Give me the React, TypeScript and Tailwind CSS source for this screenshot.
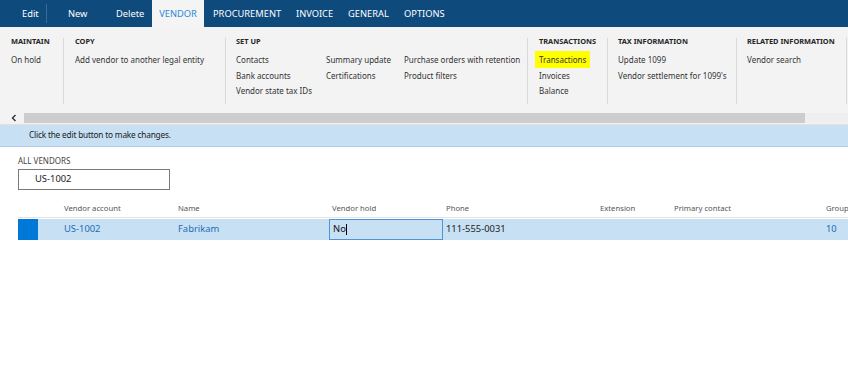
import React from "react";

const font = { fontFamily: "'Noto Sans', 'Open Sans', sans-serif" };

const Sep = () => <div className="w-px shrink-0 self-stretch bg-[#d9d9d9] mt-[11px] mb-[8px]" />;

const Group = ({ title, children, className }: { title: string; children: React.ReactNode; className?: string }) => (
  <div className={"flex flex-col shrink-0 pt-[8px] whitespace-nowrap " + (className ?? "")}>
    <div className="text-[7.4px] font-bold text-[#262626] leading-[12px]">{title}</div>
    <div className="mt-[5px]">{children}</div>
  </div>
);

const Item = ({ children, hl }: { children: React.ReactNode; hl?: boolean }) => (
  <div className="h-[15.5px] leading-[15px] text-[8px] text-[#333]">
    <span className={hl ? "bg-[#ffff00] px-[4px] -mx-[4px] py-[3px]" : ""}>{children}</span>
  </div>
);

export default function App() {
  const cols = [
    { label: "Vendor account", w: "w-[114px]" },
    { label: "Name", w: "w-[154px]" },
    { label: "Vendor hold", w: "w-[114px]" },
    { label: "Phone", w: "w-[154px]" },
    { label: "Extension", w: "w-[74px]" },
    { label: "Primary contact", w: "w-[152px]" },
    { label: "Group", w: "w-[40px]" },
  ];
  return (
    <div className="w-[848px] h-[384px] bg-white overflow-hidden" style={font}>
      {/* top command bar */}
      <div className="h-[27px] bg-[#0f4a7d] flex items-stretch text-[9.3px] text-white whitespace-nowrap">
        <div className="w-[46px] shrink-0 flex items-center pl-[22px]">Edit</div>
        <div className="w-px shrink-0 bg-[#3a6a95] my-[4px]" />
        <div className="w-[69px] shrink-0 flex items-center pl-[21px]">New</div>
        <div className="w-[36px] shrink-0 flex items-center">Delete</div>
        <div className="w-[52px] shrink-0 flex items-center justify-center bg-[#f4f4f4] text-[#2b88d8]">VENDOR</div>
        <div className="w-[9px] shrink-0" />
        <div className="w-[83px] shrink-0 flex items-center">PROCUREMENT</div>
        <div className="w-[52px] shrink-0 flex items-center">INVOICE</div>
        <div className="w-[56px] shrink-0 flex items-center">GENERAL</div>
        <div className="shrink-0 flex items-center">OPTIONS</div>
      </div>

      {/* ribbon */}
      <div className="h-[85px] bg-[#f3f3f3] flex overflow-hidden">
        <Group title="MAINTAIN" className="pl-[11px] w-[63px]">
          <Item>On hold</Item>
        </Group>
        <Sep />
        <Group title="COPY" className="pl-[11px] w-[161px]">
          <Item>Add vendor to another legal entity</Item>
        </Group>
        <Sep />
        <Group title="SET UP" className="pl-[10px] w-[301px]">
          <div className="flex">
            <div className="w-[90px] shrink-0">
              <Item>Contacts</Item>
              <Item>Bank accounts</Item>
              <Item>Vendor state tax IDs</Item>
            </div>
            <div className="w-[78px] shrink-0">
              <Item>Summary update</Item>
              <Item>Certifications</Item>
            </div>
            <div>
              <Item>Purchase orders with retention</Item>
              <Item>Product filters</Item>
            </div>
          </div>
        </Group>
        <Sep />
        <Group title="TRANSACTIONS" className="pl-[11px] w-[79px]">
          <Item hl>Transactions</Item>
          <Item>Invoices</Item>
          <Item>Balance</Item>
        </Group>
        <Sep />
        <Group title="TAX INFORMATION" className="pl-[10px] w-[128px]">
          <Item>Update 1099</Item>
          <Item>Vendor settlement for 1099&apos;s</Item>
        </Group>
        <Sep />
        <Group title="RELATED INFORMATION" className="pl-[10px] w-[109px]">
          <Item>Vendor search</Item>
        </Group>
        <Sep />
      </div>

      {/* scroll bar */}
      <div className="h-[13px] bg-[#f3f3f3] flex items-center border-b border-[#e0e0e0]">
        <div className="w-[24px] shrink-0 flex justify-center pl-[4px]">
          <svg width="8" height="8" viewBox="0 0 8 8">
            <path d="M5.5 1 L2.5 4 L5.5 7" stroke="#333" strokeWidth="1.4" fill="none" />
          </svg>
        </div>
        <div className="w-[781px] shrink-0 h-[10px] bg-[#cdcdcd]" />
        <div className="flex-1 h-[10px] bg-[#efefef]" />
      </div>

      {/* info bar */}
      <div className="h-[22px] bg-[#c7e0f4] border-b border-[#b0cbe2] flex items-center pl-[29px] text-[8.3px] text-[#222] tracking-[-0.2px]">
        Click the edit button to make changes.
      </div>

      {/* content */}
      <div className="pl-[18px] pt-[9px]">
        <div className="text-[8px] text-[#444] leading-[10px]">ALL VENDORS</div>
        <div className="mt-[3px] w-[152px] h-[21px] border border-[#7a7a7a] flex items-center pl-[16px] text-[9.4px] text-[#222]">
          US-1002
        </div>

        <div className="mt-[11px] flex h-[17px] items-center text-[7.7px] text-[#555] whitespace-nowrap border-b border-[#e3e3e3]">
          <div className="w-[46px] shrink-0" />
          {cols.map((c) => (
            <div key={c.label} className={c.w + " shrink-0"}>
              {c.label}
            </div>
          ))}
        </div>
        <div className="flex h-[21px] mt-[1px] bg-[#c7e0f4] items-stretch text-[9.4px] whitespace-nowrap">
          <div className="w-[20px] shrink-0 bg-[#0078d7]" />
          <div className="w-[26px] shrink-0" />
          <div className="w-[114px] shrink-0 flex items-center text-[#1e6cb5]">US-1002</div>
          <div className="w-[154px] shrink-0 flex items-center text-[#1e6cb5]">Fabrikam</div>
          <div className="w-[114px] shrink-0 flex items-stretch -ml-[3px] mr-[3px]">
            <div className="flex-1 border border-[#4f94d4] flex items-center pl-[3px] text-[#111]">
              No<span className="w-px h-[11px] bg-black" />
            </div>
          </div>
          <div className="w-[154px] shrink-0 flex items-center text-[#222]">111-555-0031</div>
          <div className="w-[74px] shrink-0" />
          <div className="w-[152px] shrink-0" />
          <div className="flex-1 flex items-center text-[#1e6cb5]">10</div>
        </div>
      </div>
    </div>
  );
}
